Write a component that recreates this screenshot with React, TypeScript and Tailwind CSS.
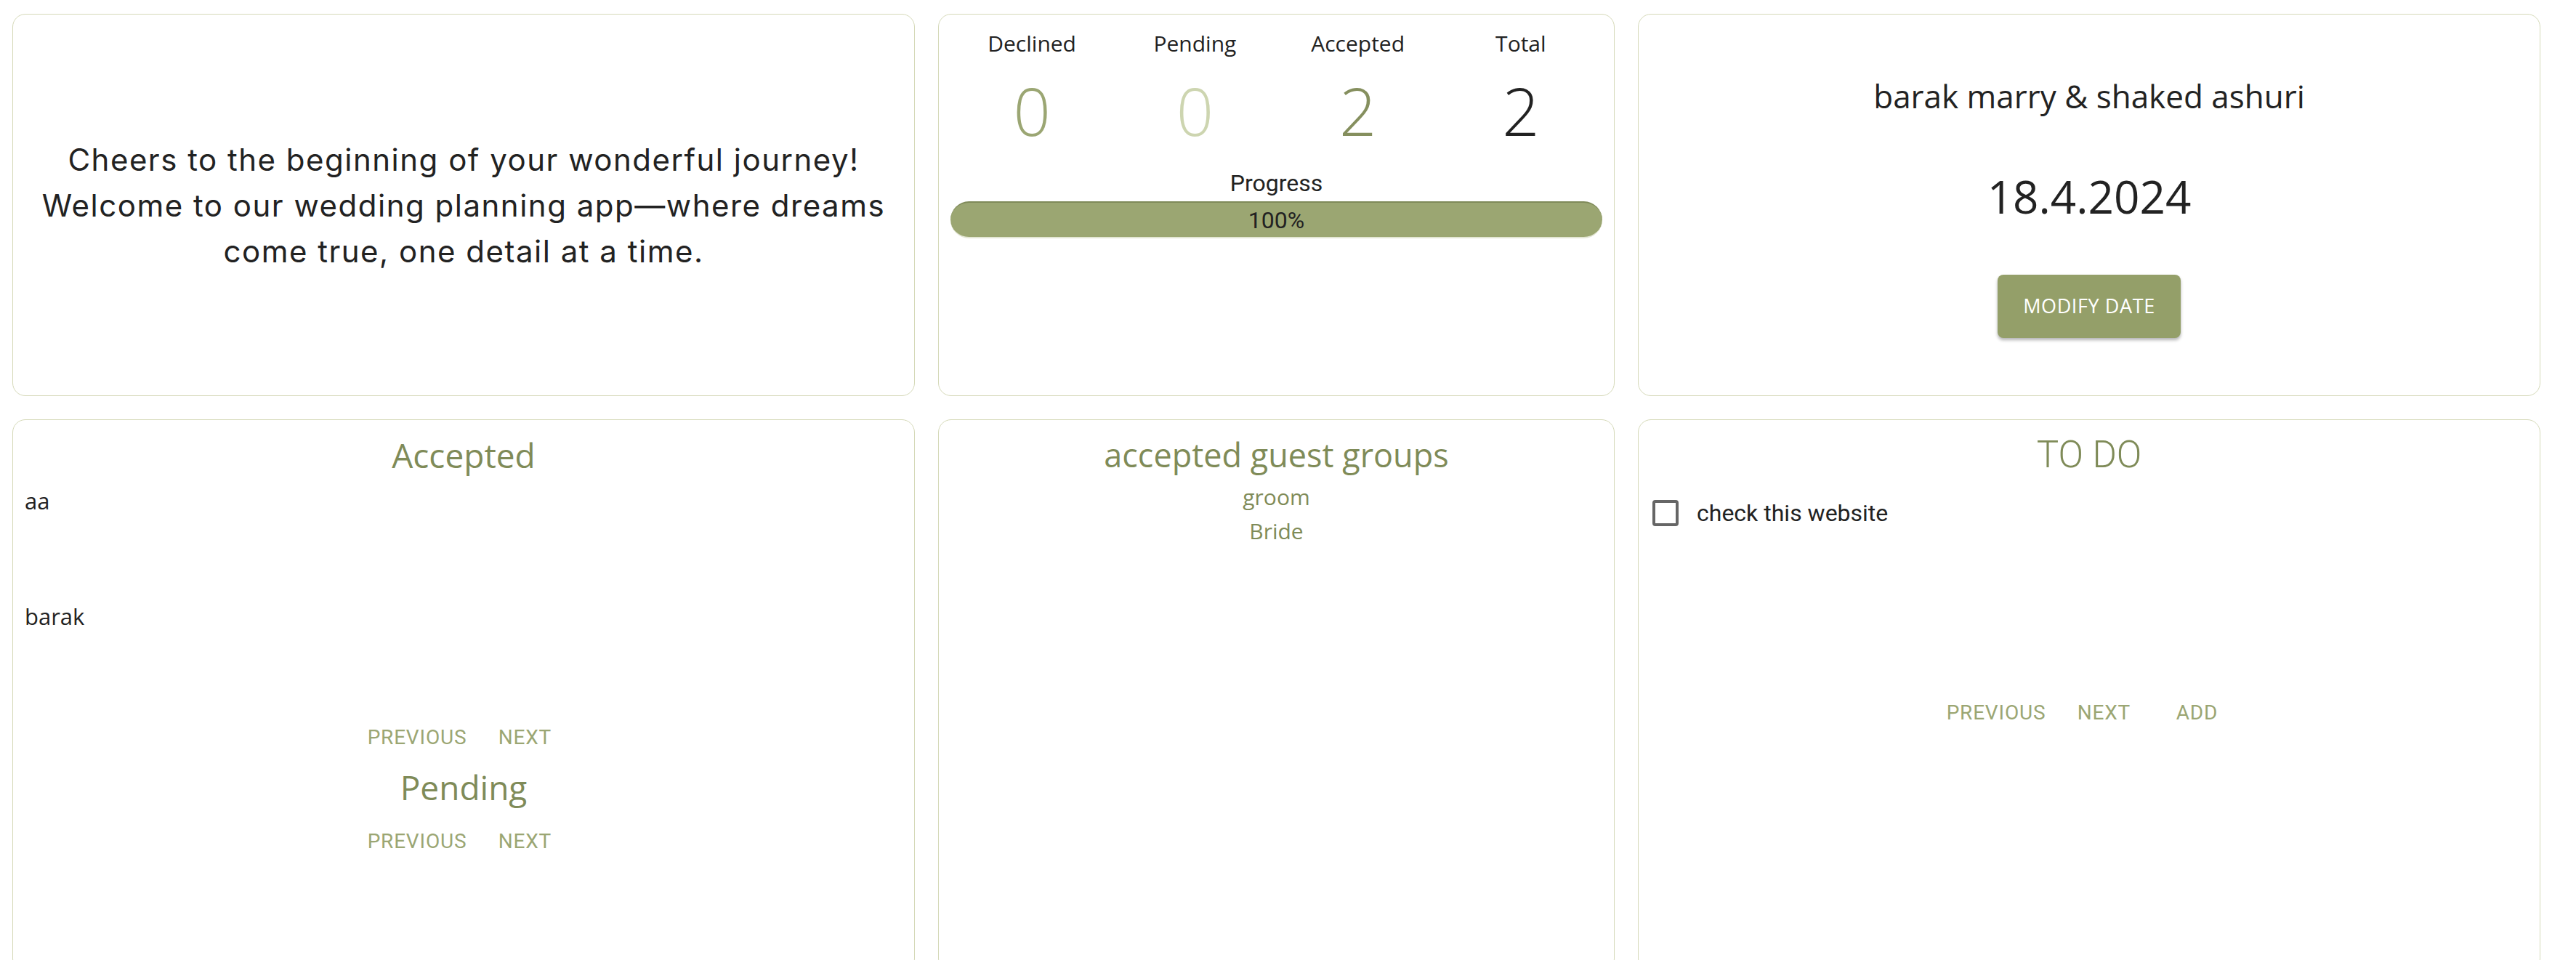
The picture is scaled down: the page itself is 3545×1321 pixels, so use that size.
import React from "react";

const OS = { fontFamily: '"Open Sans", "Noto Sans", sans-serif' };
const RB = { fontFamily: 'Roboto, "Liberation Sans", sans-serif' };

function TextBtn({ children }: { children: React.ReactNode }) {
  return (
    <button
      className="min-w-[128px] px-[16px] h-[60px] flex items-center justify-center text-[28px] font-normal tracking-[0.8px] text-[#9ba673] uppercase"
      style={RB}
    >
      {children}
    </button>
  );
}

function Card({ children, className = "" }: { children: React.ReactNode; className?: string }) {
  return (
    <div className={"rounded-[18px] border border-[#d5d9b8] bg-white " + className}>{children}</div>
  );
}

export default function App() {
  return (
    <div className="w-[3545px] h-[1321px] overflow-hidden bg-white">
      <div className="pl-[17px] pt-[19px] grid grid-cols-[1242px_931px_1242px] grid-rows-[526px_760px] gap-[32px]">
        {/* Card 1 */}
        <Card className="flex items-center justify-center">
          <div
            className="text-center text-[42px] leading-[63px] tracking-[1.5px] text-[#222]"
            style={{ fontFamily: 'Inter, "Open Sans", sans-serif', fontWeight: 400 }}
          >
            <div className="whitespace-nowrap">Cheers to the beginning of your wonderful journey!</div>
            <div className="whitespace-nowrap">Welcome to our wedding planning app—where dreams</div>
            <div className="whitespace-nowrap">come true, one detail at a time.</div>
          </div>
        </Card>

        {/* Card 2 */}
        <Card className="px-[16px] pt-[20px] flex flex-col">
          <div className="grid grid-cols-4 text-center">
            {[
              { l: "Declined", v: "0", c: "text-[#9ba673]" },
              { l: "Pending", v: "0", c: "text-[#cdd5b0]" },
              { l: "Accepted", v: "2", c: "text-[#858f5e]" },
              { l: "Total", v: "2", c: "text-[#222]" },
            ].map((s) => (
              <div key={s.l} className="flex flex-col items-center">
                <div className="text-[30px] leading-[40px] text-[#222]" style={OS}>
                  {s.l}
                </div>
                <div
                  className={"mt-[22px] text-[90px] leading-[100px] font-light " + s.c}
                  style={OS}
                >
                  {s.v}
                </div>
              </div>
            ))}
          </div>
          <div className="mt-[32px] text-center text-[32px] leading-[36px] text-[#222]" style={RB}>
            Progress
          </div>
          <div className="mt-[7px] h-[51px] rounded-full bg-[#9ba672] border-t-2 border-[#7f8a59] border-b-2 border-b-[#e3e6d4] flex items-center justify-center">
            <span className="text-[32px] text-[#222]" style={RB}>
              100%
            </span>
          </div>
        </Card>

        {/* Card 3 */}
        <Card className="flex flex-col items-center pt-[84px]">
          <div className="text-[44px] leading-[56px] text-[#222]" style={OS}>
            barak marry &amp; shaked ashuri
          </div>
          <div className="mt-[70px] text-[62px] leading-[80px] text-[#222]" style={OS}>
            18.4.2024
          </div>
          <button
            className="mt-[68px] w-[252px] h-[87px] rounded-[8px] bg-[#949f69] text-white text-[27px] tracking-[0.6px] shadow-[0_3px_4px_rgba(0,0,0,0.3)]"
            style={OS}
          >
            MODIFY DATE
          </button>
        </Card>

        {/* Card 4 */}
        <Card className="flex flex-col pt-[18px]">
          <div className="text-center text-[46px] leading-[60px] text-[#7f8b58]" style={OS}>
            Accepted
          </div>
          <div className="mt-[13px] px-[16px]">
            <div className="h-[159px] text-[31px] leading-[40px] text-[#222]" style={OS}>
              aa
            </div>
            <div className="h-[157px] text-[31px] leading-[40px] text-[#222]" style={OS}>
              barak
            </div>
          </div>
          <div className="flex justify-center">
            <TextBtn>Previous</TextBtn>
            <TextBtn>Next</TextBtn>
          </div>
          <div className="mt-[8px] text-center text-[46px] leading-[60px] text-[#7f8b58]" style={OS}>
            Pending
          </div>
          <div className="mt-[15px] flex justify-center">
            <TextBtn>Previous</TextBtn>
            <TextBtn>Next</TextBtn>
          </div>
        </Card>

        {/* Card 5 */}
        <Card className="flex flex-col items-center pt-[18px]">
          <div className="text-[45px] leading-[60px] text-[#7f8b58]" style={OS}>
            accepted guest groups
          </div>
          <div className="mt-[4px] text-[30px] leading-[47px] text-[#7f8b58]" style={OS}>
            groom
          </div>
          <div className="text-[30px] leading-[47px] text-[#7f8b58]" style={OS}>
            Bride
          </div>
        </Card>

        {/* Card 6 */}
        <Card className="flex flex-col pt-[18px]">
          <div className="text-center text-[51px] leading-[60px] text-[#7f8b58] font-light" style={RB}>
            TO DO
          </div>
          <div className="mt-[20px] h-[60px] flex items-center pl-[19px]">
            <div className="w-[36px] h-[36px] rounded-[4px] border-[4px] border-[#666]" />
            <span className="ml-[25px] text-[32px] text-[#222]" style={RB}>
              check this website
            </span>
          </div>
          <div className="mt-[215px] flex justify-center">
            <TextBtn>Previous</TextBtn>
            <TextBtn>Next</TextBtn>
            <TextBtn>Add</TextBtn>
          </div>
        </Card>
      </div>
    </div>
  );
}
